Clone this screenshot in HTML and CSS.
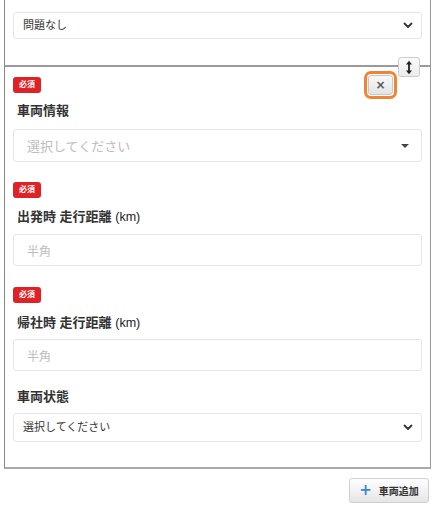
FILE: index.html
```html
<!DOCTYPE html>
<html lang="ja">
<head>
<meta charset="utf-8">
<link rel="stylesheet" href="styles.css">
</head>
<body>
<div class="page">
  <div class="panel">
    <div class="section top">
      <div class="select">
        <span class="sel-text">問題なし</span>
        <svg class="chev" width="10" height="7" viewBox="0 0 10 7"><path d="M1.5 1.5 L5 5 L8.5 1.5" fill="none" stroke="#333" stroke-width="1.8" stroke-linecap="round" stroke-linejoin="round"/></svg>
      </div>
    </div>
    <div class="section vehicle">
      <button class="resize" type="button" aria-label="並べ替え">
        <svg width="8" height="15" viewBox="0 0 8 15"><path d="M4 2 L4 13" stroke="#222" stroke-width="1.8"/><path d="M1 4.5 L4 0.8 L7 4.5 Z" fill="#222"/><path d="M1 10.5 L4 14.2 L7 10.5 Z" fill="#222"/></svg>
      </button>
      <div class="head-row">
        <span class="badge">必須</span>
        <button class="close" type="button">×</button>
      </div>
      <div class="label l1">車両情報</div>
      <div class="select2">
        <span class="ph">選択してください</span>
        <span class="caret"></span>
      </div>

      <div class="badge-row"><span class="badge">必須</span></div>
      <div class="label l2">出発時 走行距離 <span class="unit">(km)</span></div>
      <div class="input"><span class="ph-sm">半角</span></div>

      <div class="badge-row b3"><span class="badge">必須</span></div>
      <div class="label l3">帰社時 走行距離 <span class="unit">(km)</span></div>
      <div class="input i2"><span class="ph-sm">半角</span></div>

      <div class="label l4">車両状態</div>
      <div class="select last">
        <span class="sel-text">選択してください</span>
        <svg class="chev" width="10" height="7" viewBox="0 0 10 7"><path d="M1.5 1.5 L5 5 L8.5 1.5" fill="none" stroke="#333" stroke-width="1.8" stroke-linecap="round" stroke-linejoin="round"/></svg>
      </div>
    </div>
  </div>
  <div class="actions">
    <button class="add" type="button"><span class="plus">+</span>車両追加</button>
  </div>
</div>
</body>
</html>
```
FILE: styles.css
```css
* { box-sizing: border-box; }
html, body {
  margin: 0;
  padding: 0;
  background: #fff;
  font-family: "Liberation Sans", "Noto Sans CJK JP", sans-serif;
  color: #333;
}
.page {
  width: 435px;
  padding: 0 4px 0 4px;
}
.panel {
  width: 427px;
  border-left: 1px solid #888;
  border-right: 1px solid #999;
  border-bottom: 2px solid #aaa;
}
.section {
  padding: 0 8px;
}
.top {
  padding-top: 12px;
  padding-bottom: 26px;
}
.select {
  height: 27px;
  border: 1px solid #e6e6e6;
  border-radius: 3px;
  display: flex;
  align-items: center;
  justify-content: space-between;
  padding: 0 8px 0 9px;
  font-size: 11px;
  color: #333;
}
.sel-text { line-height: 1; }
.chev { display: block; }
.vehicle {
  position: relative;
  border-top: 2px solid #9a9a9a;
  padding-top: 8px;
  padding-bottom: 25px;
}
.resize {
  position: absolute;
  top: -10px;
  right: 10px;
  width: 22px;
  height: 20px;
  padding: 0;
  border: 1px solid #ccc;
  border-radius: 3px;
  background: linear-gradient(#fafafa, #ececec);
  display: flex;
  align-items: center;
  justify-content: center;
}
.head-row {
  height: 20px;
  display: flex;
  align-items: center;
  justify-content: space-between;
  padding-right: 29px;
}
.badge {
  display: inline-flex;
  align-items: center;
  justify-content: center;
  width: 28px;
  height: 16px;
  background: #df2226;
  color: #fff;
  border-radius: 3px;
  font-size: 8px;
  font-weight: 700;
  line-height: 1;
}
.close {
  width: 25px;
  height: 20px;
  padding: 0;
  border: 1px solid #c8c8c8;
  background: linear-gradient(#f8f8f8, #e4e4e4);
  color: #555;
  font-size: 12px;
  font-weight: 700;
  line-height: 1;
  font-family: "DejaVu Sans", sans-serif;
  outline: 3px solid #ef8532;
  outline-offset: 1px;
  border-radius: 3px;
}
.label {
  height: 20px;
  line-height: 20px;
  font-size: 13px;
  font-weight: 700;
  color: #333;
  padding-left: 4px;
}
.unit {
  font-weight: 400;
  font-size: 12.5px;
  color: #222;
}
.l1 { margin-top: 6px; }
.l2 { margin-top: 9px; }
.l3 { margin-top: 10px; }
.l4 { margin-top: 16px; }
.select2 {
  margin-top: 8px;
  height: 33px;
  border: 1px solid #e6e6e6;
  border-radius: 3px;
  display: flex;
  align-items: center;
  justify-content: space-between;
  padding: 0 12px 0 13px;
}
.ph {
  font-size: 13px;
  color: #bdbdbd;
}
.caret {
  width: 0;
  height: 0;
  border-left: 4px solid transparent;
  border-right: 4px solid transparent;
  border-top: 4px solid #444;
}
.badge-row {
  margin-top: 20px;
  height: 16px;
  display: flex;
}
.b3 { margin-top: 21px; }
.input {
  margin-top: 7px;
  height: 32px;
  border: 1px solid #e6e6e6;
  border-radius: 3px;
  display: flex;
  align-items: center;
  padding-left: 13px;
}
.i2 { margin-top: 6px; }
.ph-sm {
  font-size: 12px;
  color: #bdbdbd;
}
.last {
  margin-top: 6px;
  height: 29px;
}
.actions {
  display: flex;
  justify-content: flex-end;
  padding-top: 9px;
  padding-right: 2px;
}
.add {
  width: 80px;
  height: 25px;
  border: 1px solid #cfcfcf;
  border-radius: 3px;
  background: linear-gradient(#ffffff, #e6e6e6);
  display: flex;
  align-items: center;
  justify-content: center;
  gap: 7px;
  font-family: "Noto Sans CJK JP", sans-serif;
  font-size: 10px;
  font-weight: 700;
  color: #333;
  padding: 0;
}
.plus {
  color: #3b87d6;
  font-size: 15px;
  font-weight: 700;
  line-height: 1;
  font-family: "DejaVu Sans", sans-serif;
}
```
